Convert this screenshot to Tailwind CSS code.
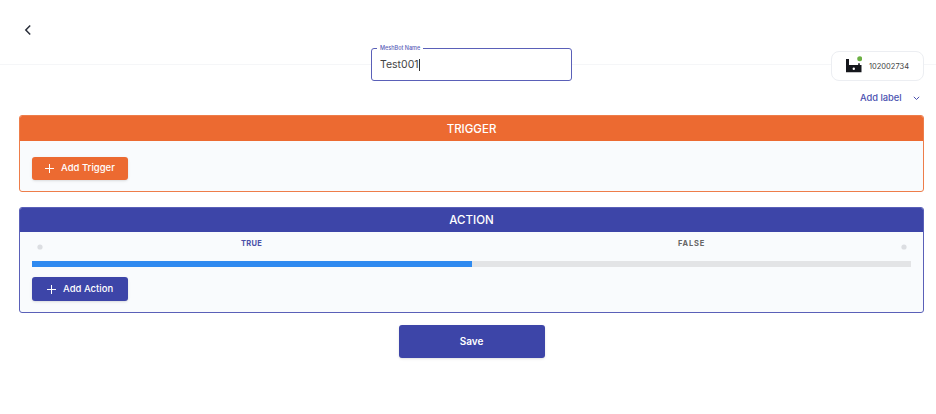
<!DOCTYPE html>
<html lang="en">
<head>
  <meta charset="UTF-8">
  <title>MeshBot</title>
  <script src="https://cdn.jsdelivr.net/npm/@tailwindcss/browser@4"></script>
</head>
<body class="bg-white font-['Inter',sans-serif] text-[#1f2430] w-[936px] h-[414px] overflow-hidden">
  <!-- Top bar -->
  <div class="relative h-[115px]">
    <div class="absolute left-0 right-0 top-[64px] border-t border-[#f5f6f8]"></div>
    <button class="absolute left-[23px] top-[24px]">
      <svg width="10" height="12" viewBox="0 0 10 12" fill="none" stroke="#2a2f3a" stroke-width="1.5"><path d="M7.2 1.4 2.8 6l4.4 4.6"/></svg>
    </button>

    <!-- Name field -->
    <div class="absolute left-[371px] top-[48px] w-[201px] h-[33px] rounded-[3px] border-[1.5px] border-[#5a60b8] bg-white flex items-center pl-[8px]">
      <span class="absolute left-[5px] top-[-4px] bg-white px-[3px] text-[5.5px] leading-[7px] text-[#5a60b8] font-medium">MeshBot Name</span>
      <span class="text-[10.5px] text-[#444] border-r border-[#333] leading-[12px]">Test001</span>
    </div>

    <!-- Device -->
    <div class="absolute left-[831px] top-[51px] w-[93px] h-[30px] rounded-[8px] border border-[#eceef2] bg-white flex items-center pl-[14px] gap-[7px]">
      <svg width="16" height="20" viewBox="0 0 16 20" class="shrink-0">
        <circle cx="13.7" cy="2.7" r="2.5" fill="#6cb044"/>
        <path d="M0 3h3v6h9.2V7.2h1.6V9h1.7v7.3H0z" fill="#15171c"/>
        <circle cx="7.8" cy="12.8" r="1.2" fill="#fff"/>
      </svg>
      <span class="text-[7.5px] text-[#444] pt-[1px]">102002734</span>
    </div>

    <!-- Add label -->
    <div class="absolute left-[860px] top-[92px] flex items-center gap-[11px] text-[#4a50b0]">
      <span class="text-[9.3px] font-medium leading-[12px]">Add label</span>
      <svg width="7" height="5" viewBox="0 0 7 5" fill="none" stroke="#4a50b0" stroke-width="1"><path d="M.8.8 3.5 3.5 6.2.8"/></svg>
    </div>
  </div>

  <div class="mx-[19px] w-[905px]">
    <!-- Trigger -->
    <section class="h-[77px] rounded-[3px] border border-[#ee7d4a] bg-[#f9fbfd] overflow-hidden">
      <div class="h-[25px] pt-[2px] bg-[#ec6a31] flex items-center justify-center text-white text-[11.5px] font-medium">TRIGGER</div>
      <div class="pl-[12px] pt-[16px]">
        <button class="w-[96px] h-[23px] rounded-[3px] bg-[#ec6a31] shadow-sm text-white flex items-center pl-[13px] gap-[7px] text-[9.5px] font-medium">
          <svg width="9" height="9" viewBox="0 0 9 9" stroke="#fff" stroke-width="1"><path d="M4.5 0v9M0 4.5h9"/></svg>
          Add Trigger
        </button>
      </div>
    </section>

    <!-- Action -->
    <section class="mt-[15px] h-[106px] rounded-[3px] border border-[#5a60b8] bg-[#f9fbfd] overflow-hidden">
      <div class="h-[24px] pt-[2px] bg-[#3d45a8] flex items-center justify-center text-white text-[11.5px] font-medium">ACTION</div>
      <div class="px-[12px]">
        <div class="h-[29px] flex items-center relative">
          <svg width="6" height="6" viewBox="0 0 6 6" class="ml-[5px]"><circle cx="3" cy="3" r="2.6" fill="#dcdee2"/></svg>
          <span class="absolute left-[209px] top-[6px] text-[7.5px] font-bold text-[#4a50a8] tracking-[0.3px]">TRUE</span>
          <span class="absolute left-[646px] top-[6px] text-[7.5px] font-bold text-[#666] tracking-[0.8px]">FALSE</span>
          <svg width="6" height="6" viewBox="0 0 6 6" class="absolute right-[4px]"><circle cx="3" cy="3" r="2.6" fill="#dcdee2"/></svg>
        </div>
        <div class="h-[6px] bg-[#e3e4e6] flex">
          <div class="w-[50%] bg-[#2f8af0]"></div>
        </div>
        <button class="mt-[10px] w-[96px] h-[24px] rounded-[3px] bg-[#3d45a8] shadow-sm text-white flex items-center pl-[15px] gap-[7px] text-[9.5px] font-medium">
          <svg width="9" height="9" viewBox="0 0 9 9" stroke="#fff" stroke-width="1"><path d="M4.5 0v9M0 4.5h9"/></svg>
          Add Action
        </button>
      </div>
    </section>

    <!-- Save -->
    <div class="mt-[12px] flex justify-center">
      <button class="w-[146px] h-[33px] rounded-[3px] bg-[#3d45a8] shadow-sm text-white text-[10px] font-semibold">Save</button>
    </div>
  </div>
</body>
</html>
